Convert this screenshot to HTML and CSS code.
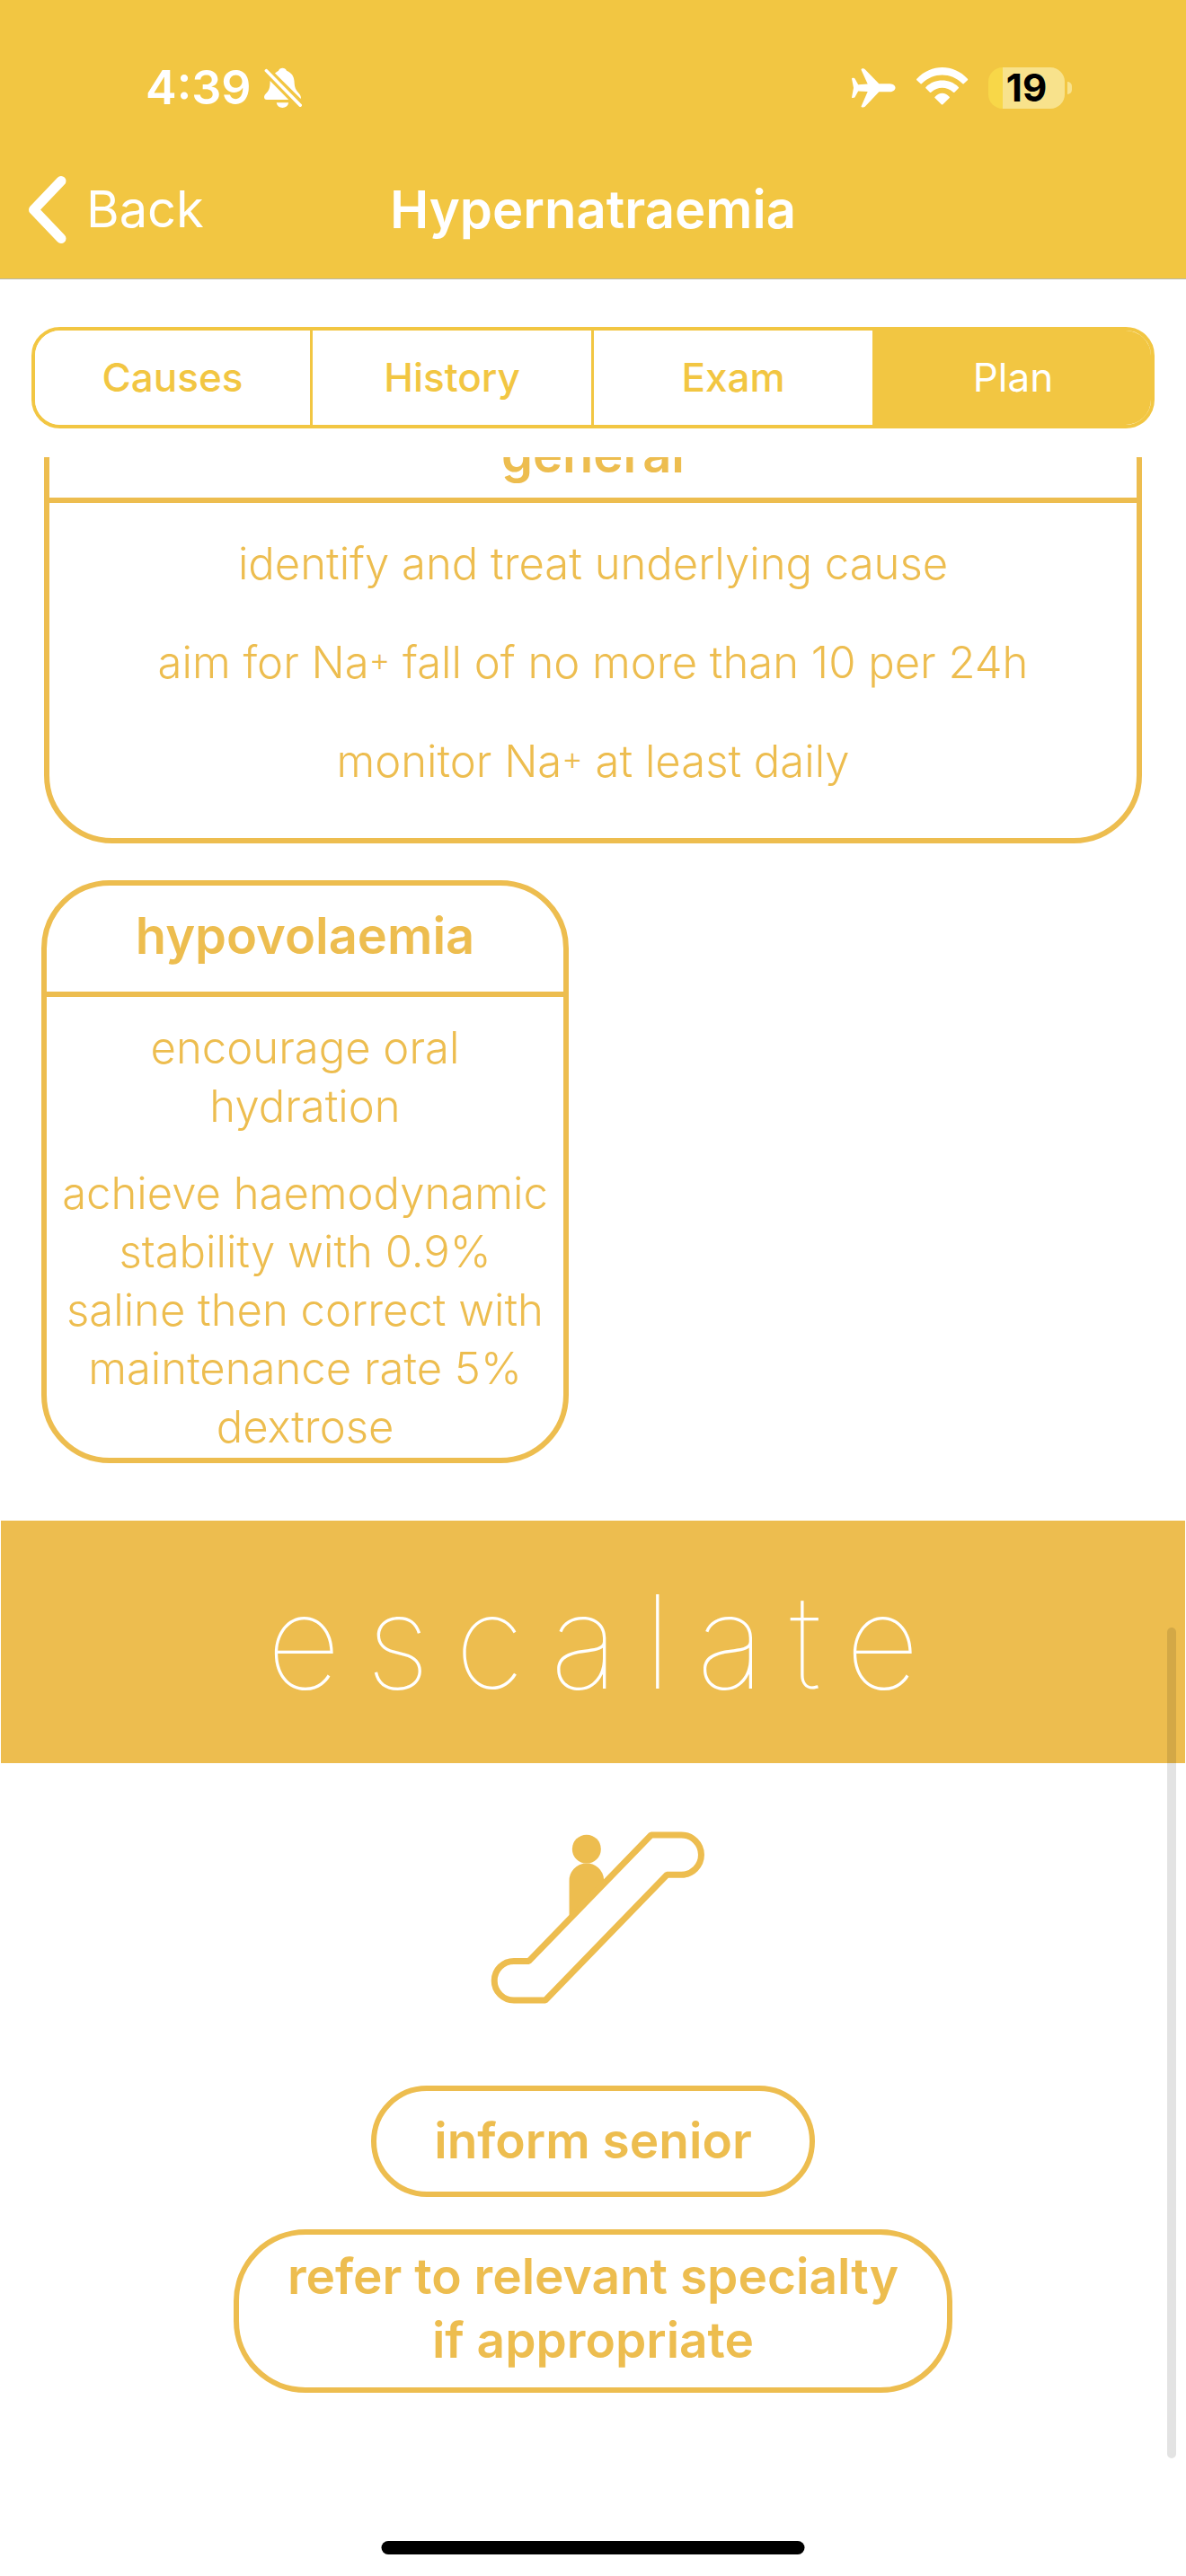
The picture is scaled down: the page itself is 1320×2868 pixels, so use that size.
FILE: index.html
```html
<!DOCTYPE html>
<html lang="en">
<head>
<meta charset="utf-8">
<meta name="viewport" content="width=device-width, initial-scale=1">
<title>Hypernatraemia</title>
<link rel="stylesheet" href="styles.css">
</head>
<body>
<div class="app">
  <header class="top">
    <div class="status">
      <div class="status-left">
        <span class="clock">4:39</span>
        <svg width="43" height="48" viewBox="0 0 43 48" aria-hidden="true">
          <g transform="translate(0 1) scale(1 .96)">
            <path fill="#fff" d="M12 6.9C14 5 15 4.600 16 4C17 -.3 23.800 -.3 25 4C31 6.500 33.200 11 33.500 16C33.800 22 34.500 25 37 28C39.500 31 41.600 33 40.700 36.500ZM6.600 15.500L27.200 37.400H3C-.5 37.400 -.8 33.500 1.500 31C5.500 26.500 6.600 24 6.600 15.500ZM13.700 41H27.200C26.500 44.800 24 46.800 20.400 46.800C16.800 46.800 14.400 44.800 13.700 41Z"/>
            <path stroke="#fff" stroke-width="3.600" stroke-linecap="round" d="M2.400 3.800L40.200 44"/>
          </g>
        </svg>
      </div>
      <div class="status-right">
        <svg width="50" height="48" viewBox="0 0 50 48" aria-hidden="true">
          <path transform="translate(0 1) scale(1 .96)" fill="#fff" d="M10.500 2.800C10.300 1.200 13.600 .8 14.500 2L30.300 18.900H42.500C50.500 19.500 50.500 28 42.500 28.500H30.300L14.700 45.700C13.500 46.800 10.300 46.500 10.500 45.200L17.700 28.200L7.200 27.500L3.600 34.400C3 35.600 0 35.600 0 34.800L2 23.700L0 13C0 12 3 12 3.600 13.200L7.200 20L17.700 19.300Z"/>
        </svg>
        <svg width="58" height="48" viewBox="0 0 58 48" aria-hidden="true">
          <path transform="translate(0 1) scale(1 .96)" fill="#fff" d="M.3 14.800Q-.3 13.900 .4 13.200C16.500 -4.300 41 -4.300 56.900 13.200Q57.500 13.900 56.900 14.800L52.600 18.900Q51.900 19.500 51.200 18.800C38 5.700 19.200 5.700 6 18.800Q5.300 19.500 4.700 18.900ZM10.400 24.200Q9.800 23.500 10.500 22.800C20.500 12.600 36.700 12.600 46.800 22.800Q47.400 23.500 46.800 24.200L42.400 28.900Q41.700 29.500 41 28.900C33.500 22 23.800 22 16.300 28.900Q15.600 29.500 14.900 28.900ZM20.500 35.500Q20 34.800 20.700 34.200C25.500 28.500 31.800 28.500 36.600 34.200Q37.200 34.800 36.700 35.500L29.400 43Q28.600 43.700 27.800 43Z"/>
        </svg>
        <div class="battery"><span class="battery-body">19</span><span class="battery-cap"></span></div>
      </div>
    </div>
    <div class="navbar">
      <a class="back" href="#">
        <svg width="46" height="80" viewBox="0 0 46 80" aria-hidden="true">
          <path fill="none" stroke="#fff" stroke-width="11" stroke-linecap="round" stroke-linejoin="round" d="M38 8.500L7.500 40.500L38 72.500"/>
        </svg>
        Back
      </a>
      <h1 class="title">Hypernatraemia</h1>
    </div>
  </header>

  <nav class="tabs" aria-label="Sections">
    <button class="tab" type="button">Causes</button>
    <button class="tab" type="button">History</button>
    <button class="tab" type="button">Exam</button>
    <button class="tab tab-active" type="button" aria-current="true">Plan</button>
  </nav>

  <main class="scroller">
    <div class="cards">
      <section class="card card-wide">
        <h2 class="card-title">general</h2>
        <div class="card-body">
          <p>identify and treat underlying cause</p>
          <p>aim for Na<sup>+</sup> fall of no more than 10 per 24h</p>
          <p>monitor Na<sup>+</sup> at least daily</p>
        </div>
      </section>
      <section class="card">
        <h2 class="card-title">hypovolaemia</h2>
        <div class="card-body">
          <p>encourage oral<br>hydration</p>
          <p>achieve haemodynamic<br>stability with 0.9%<br>saline then correct with<br>maintenance rate 5%<br>dextrose</p>
        </div>
      </section>
    </div>

    <h2 class="banner">escalate</h2>

    <div class="escalate">
      <svg class="escalator" width="238" height="194" viewBox="80 85 715 583" aria-hidden="true">
        <path fill="#edbd4f" d="M343 385V255A58 58 0 0 1 459 250V262Z"/>
        <circle fill="#edbd4f" cx="401" cy="147" r="48"/>
        <path fill="#fff" stroke="#edbd4f" stroke-width="21" stroke-linejoin="bevel" d="M617 100H718A66.500 66.500 0 0 1 718 233H670L263 653H158A65.500 65.500 0 0 1 158 522H208Z"/>
      </svg>
      <p class="pill">inform senior</p>
      <p class="pill pill-tall">refer to relevant specialty<br>if appropriate</p>
    </div>
    <div class="scrollbar"></div>
  </main>
  <div class="home-indicator"></div>
</div>
</body>
</html>
```
FILE: styles.css
```css
* {
  box-sizing: border-box;
}

body {
  margin: 0;
  background: #fff;
  font-family: Inter, "Liberation Sans", sans-serif;
}

h1, h2, p {
  margin: 0;
}

svg {
  display: block;
  flex: none;
}

sup {
  font-size: 36px;
  line-height: 0;
  vertical-align: 8px;
}

.app {
  position: relative;
  display: flex;
  flex-direction: column;
  min-height: 100vh;
}

.top {
  background: #f2c642;
  color: #fff;
  border-bottom: 1px solid #b8b8a8;
}

.status {
  display: flex;
  justify-content: space-between;
  height: 156px;
  padding: 74px 127px 0 162px;
}

.status-left,
.status-right {
  display: flex;
  align-items: center;
  height: 48px;
}

.status-left {
  gap: 14px;
}

.status-right {
  gap: 22px;
}

.clock {
  font-size: 52px;
  line-height: 48px;
  font-weight: 600;
}

.battery {
  display: flex;
  align-items: center;
  gap: 3px;
}

.battery-body {
  width: 85px;
  height: 46px;
  border-radius: 16px;
  background: linear-gradient(90deg, #f8d748 16px, #f8e28c 16px);
  color: #000;
  font-size: 42px;
  line-height: 46px;
  font-weight: 700;
  text-align: center;
}

.battery-cap {
  width: 5px;
  height: 14px;
  border-radius: 0 5px 5px 0;
  background: #f8e28c;
}

.navbar {
  display: grid;
  grid-template-columns: 1fr auto 1fr;
  align-items: center;
  height: 154px;
  padding: 0 30px;
}

.back {
  display: flex;
  align-items: center;
  gap: 20px;
  color: #fff;
  font-size: 56px;
  line-height: 80px;
  text-decoration: none;
}

.title {
  font-size: 58px;
  line-height: 80px;
  font-weight: 600;
}

.tabs {
  display: grid;
  grid-template-columns: 306fr 313fr 313fr 310fr;
  margin: 53px 35px 32px;
  border: 4px solid #f2c642;
  border-radius: 32px;
  overflow: hidden;
}

.tab {
  height: 105px;
  padding: 0;
  border: 0;
  border-left: 3px solid #f2c642;
  background: #fff;
  color: #f2c642;
  font: 500 44px/105px Inter, "Liberation Sans", sans-serif;
}

.tab:first-child {
  border-left: 0;
}

.tab-active {
  background: #f2c642;
  color: #fff;
  font-weight: 400;
}

.scroller {
  position: relative;
  flex: 1;
  overflow: hidden;
  color: #edbd4f;
}

.cards {
  display: grid;
  grid-template-columns: 1fr 1fr;
  gap: 41px 51px;
  margin-top: -72px;
  padding: 0 49px 0 46px;
}

.card {
  border: 6px solid #edbd4f;
  border-radius: 76px;
  text-align: center;
}

.card-title {
  padding: 21px 0 27px;
  border-bottom: 6px solid #edbd4f;
  font-size: 56px;
  line-height: 70px;
  font-weight: 600;
}

.card-body {
  display: grid;
  gap: 32px;
  padding: 24px 0 2px;
  font-size: 49px;
  line-height: 65px;
  font-weight: 300;
}

.card-wide {
  grid-column: 1 / -1;
  margin-left: 3px;
}

.card-wide .card-title {
  padding: 28px 0 13px;
}

.card-wide .card-body {
  gap: 45px;
  padding: 35px 0 53px;
}

.banner {
  margin: 64px 1px 0;
  padding-left: 28px;
  background: #edbd4f;
  color: #fff;
  font-size: 144px;
  line-height: 270px;
  font-weight: 100;
  letter-spacing: 28px;
  text-align: center;
}

.escalate {
  display: flex;
  flex-direction: column;
  align-items: center;
  padding: 75px 0 180px;
}

.escalator {
  margin-left: 10px;
}

.pill {
  margin-top: 90px;
  padding: 20px 64px 21px;
  border: 6px solid #edbd4f;
  border-radius: 62px;
  font-size: 55px;
  line-height: 71px;
  font-weight: 600;
  text-align: center;
}

.pill-tall {
  margin-top: 36px;
  padding: 11px 54px 17px;
  border-radius: 80px;
}

.scrollbar {
  position: absolute;
  top: 1303px;
  right: 11px;
  bottom: 131px;
  width: 10px;
  border-radius: 5px;
  background: rgba(0, 0, 0, 0.11);
}

.home-indicator {
  position: absolute;
  bottom: 24px;
  left: 50%;
  width: 471px;
  height: 15px;
  border-radius: 8px;
  background: #000;
  transform: translateX(-50%);
}
```
